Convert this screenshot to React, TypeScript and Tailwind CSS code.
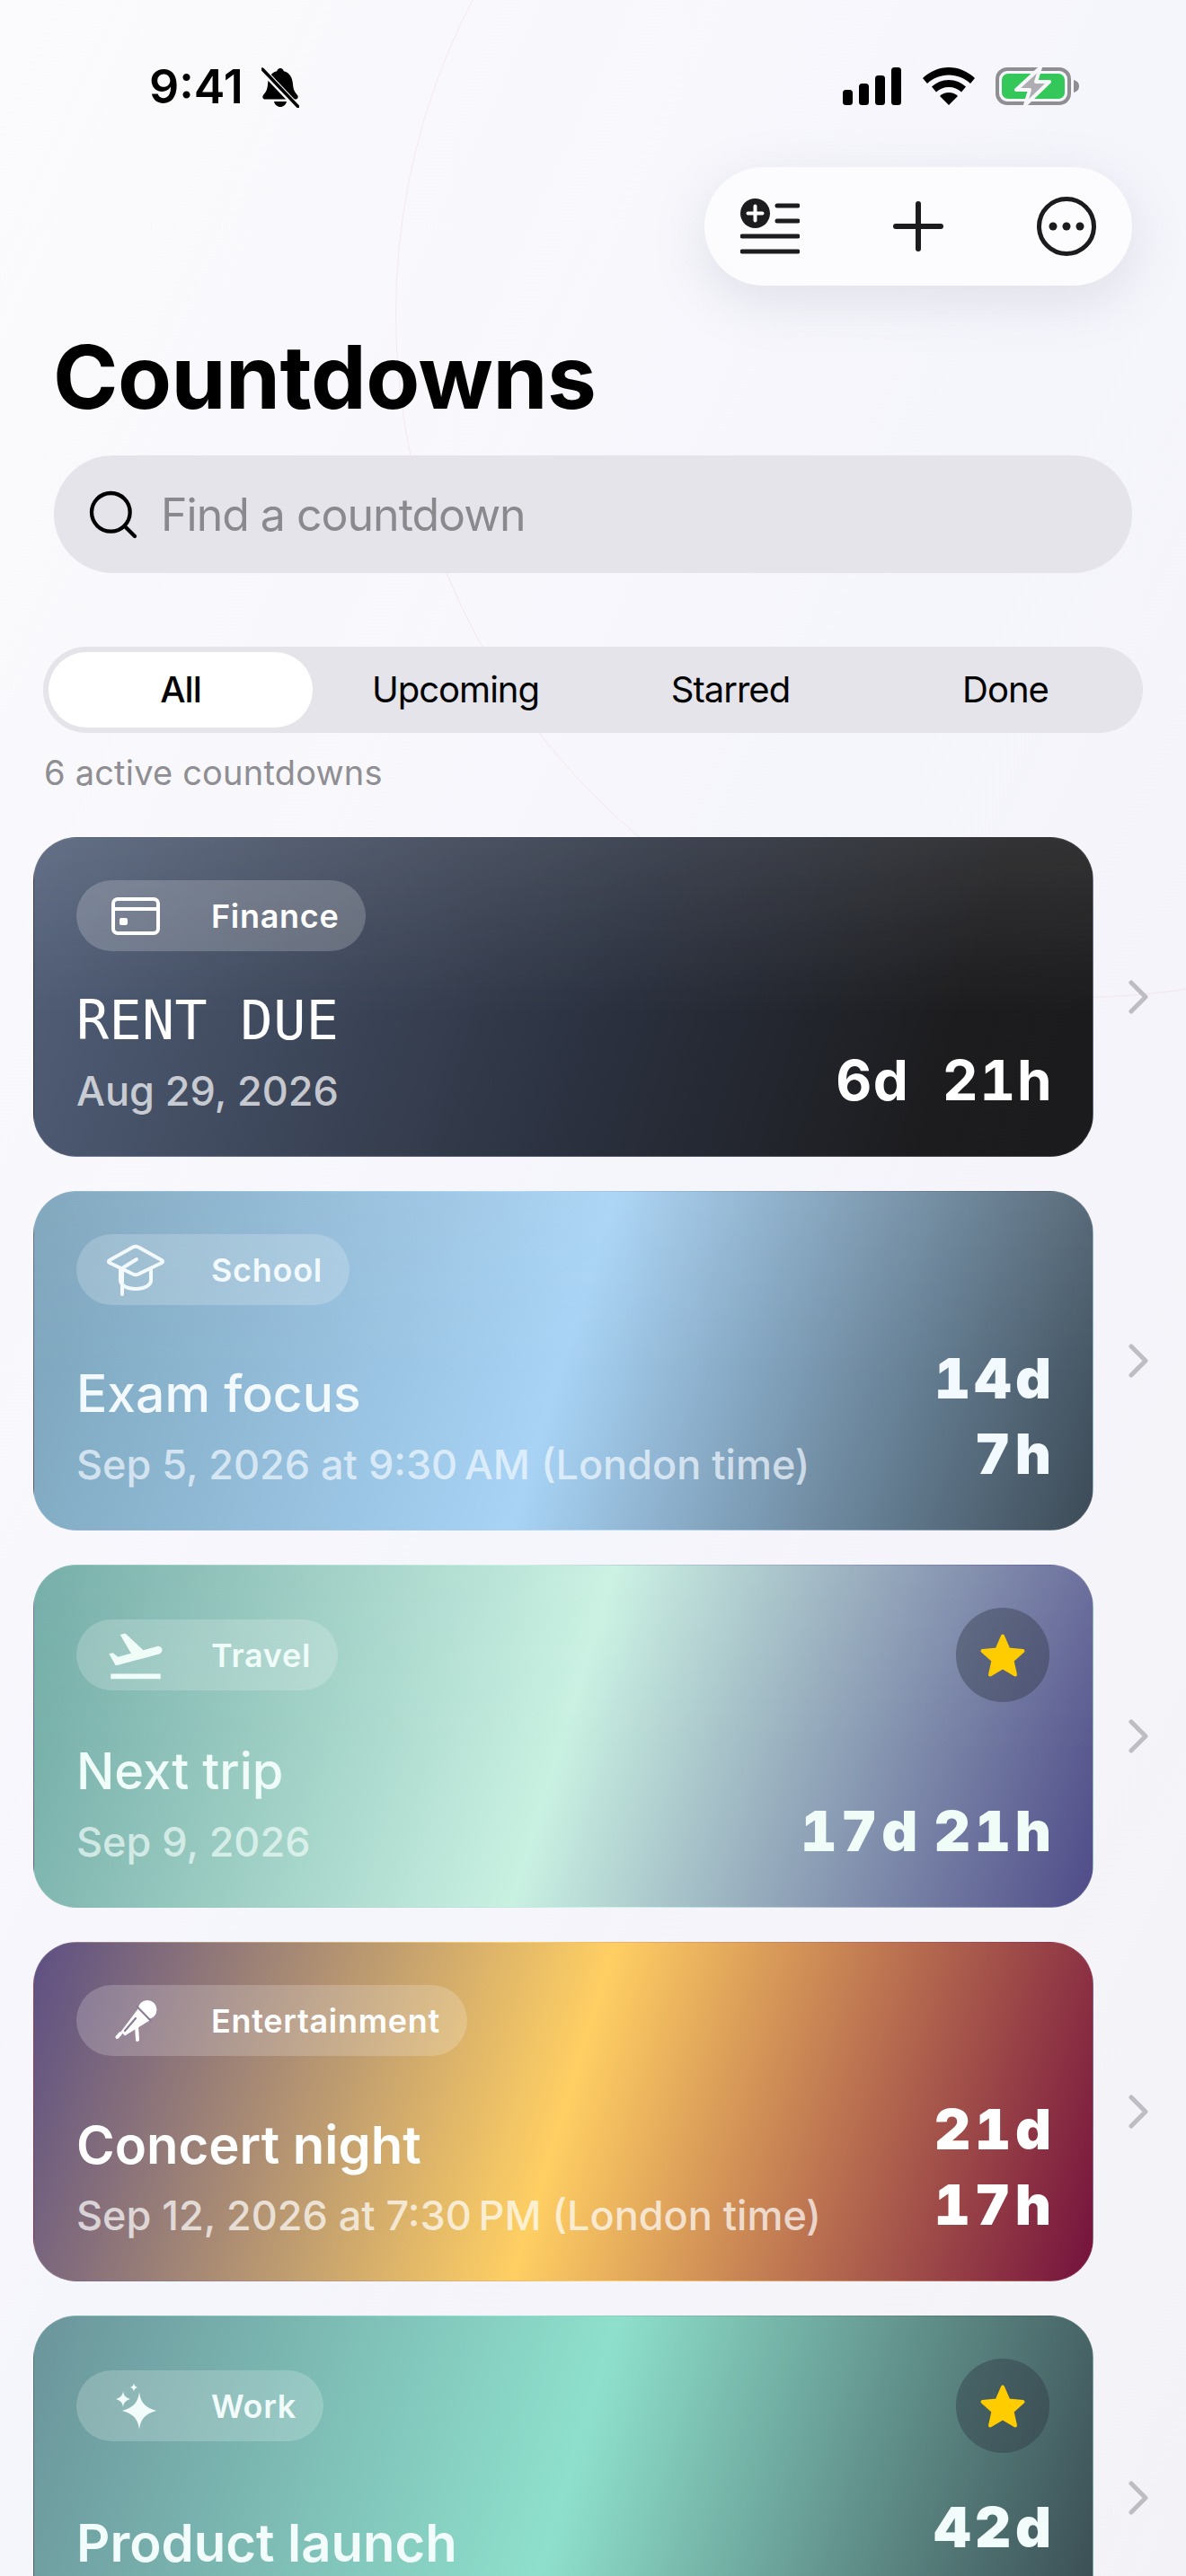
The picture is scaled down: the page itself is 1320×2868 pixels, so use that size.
import React from "react";
import { Search } from "lucide-react";
import { MdFlightTakeoff } from "react-icons/md";

const inter = "font-['Inter','Liberation_Sans',sans-serif]";

const CardIcon = () => (
  <svg viewBox="0 0 54 42" className="h-[42px] w-[54px]" fill="none" stroke="currentColor" strokeWidth="4">
    <rect x="2" y="2" width="50" height="38" rx="5" />
    <path d="M2 13h50" />
    <rect x="9" y="23" width="9" height="8" rx="2" fill="currentColor" stroke="none" />
  </svg>
);

const CapIcon = () => (
  <svg viewBox="0 0 66 58" className="h-[58px] w-[66px]" fill="none" stroke="currentColor" strokeWidth="4" strokeLinecap="round" strokeLinejoin="round">
    <path d="M30 3.500c2-1 4-1 6 0l26 14.500c1.500.8 1.500 2.200 0 3L36 33.500c-2 1-4 1-6 0L4 21c-1.500-.8-1.500-2.200 0-3Z" />
    <path d="M16 29v11c0 6 7 10 17 10s17-4 17-10V29" />
    <path d="M34 17 18 27v29" />
  </svg>
);

const MicIcon = () => (
  <svg viewBox="0 0 47 46" className="h-[46px] w-[47px]" fill="none" stroke="currentColor" strokeLinecap="round" strokeLinejoin="round">
    <circle cx="36" cy="10.500" r="10.500" fill="currentColor" stroke="none" />
    <path d="M26 9 38.500 22.500 11 39.500 6.500 35Z" fill="currentColor" stroke="none" />
    <path d="M24.500 7 40 23" stroke="#8a7c98" strokeWidth="2" />
    <path d="M23 20 11 34" stroke="#8a7c98" strokeWidth="2.200" />
    <path d="M6 37 2.500 41" strokeWidth="4" />
    <path d="M24 29 25 44" strokeWidth="4" />
  </svg>
);

const SparkIcon = () => (
  <svg viewBox="0 0 46 52" className="h-[52px] w-[46px]" fill="currentColor">
    <path d="M27 10c1.500 12 6 17 19 21-13 4-17.500 9-19 21-1.500-12-6-17-19-21 13-4 17.500-9 19-21Z" />
    <path d="M9 9c.7 5 2.300 7 8 9-5.700 2-7.300 4-8 9-.7-5-2.300-7-8-9 5.700-2 7.300-4 8-9Z" />
    <path d="M21 0c.4 3 1.300 4 4 5-2.700 1-3.600 2-4 5-.4-3-1.300-4-4-5 2.700-1 3.600-2 4-5Z" />
  </svg>
);

const Star = () => (
  <svg viewBox="0 0 52 50" className="h-[50px] w-[52px]" fill="#ffcc00" stroke="#ffcc00" strokeWidth="4" strokeLinejoin="round">
    <path d="M26 3.500 32.500 18.500 48.500 20 36.500 30.800 40 46.500 26 38.300 12 46.500 15.500 30.800 3.500 20 19.500 18.500Z" />
  </svg>
);

const Chevron = () => (
  <svg viewBox="0 0 24 38" className="ml-[38px] h-[38px] w-[24px] shrink-0" fill="none" stroke="#bdbdc3" strokeWidth="5" strokeLinecap="round" strokeLinejoin="round">
    <path d="M4 3 20 19 4 35" />
  </svg>
);

const BellSlash = () => (
  <svg viewBox="0 0 42 46" className="h-[46px] w-[42px]">
    <path d="M21 2c2 0 3.500 1.500 3.800 3.200C32 7 34.500 13 35 20c.4 6 2.500 9 5 12 1.500 2 .5 4.500-2 4.500H4c-2.500 0-3.500-2.500-2-4.500 2.500-3 4.600-6 5-12 .5-7 3-13 10.200-14.800C17.500 3.500 19 2 21 2Z" fill="#000" />
    <path d="M14 39h14c-.8 3.500-3.500 6-7 6s-6.200-2.500-7-6Z" fill="#000" />
    <path d="M2 5 40 45" stroke="#f7f7fc" strokeWidth="7" />
    <path d="M1 3 41 45" stroke="#000" strokeWidth="3.500" strokeLinecap="round" />
  </svg>
);

const Signal = () => (
  <svg viewBox="0 0 66 42" className="h-[42px] w-[66px]" fill="#000">
    <rect x="0" y="25" width="11" height="17" rx="3.500" />
    <rect x="18" y="18" width="11" height="24" rx="3.500" />
    <rect x="36" y="9" width="11" height="33" rx="3.500" />
    <rect x="54" y="0" width="11" height="42" rx="3.500" />
  </svg>
);

const Wifi = () => (
  <svg viewBox="0 0 58 42" className="h-[42px] w-[58px]" fill="#000">
    <path d="M29 0c11 0 21 4.500 29 12l-5 6C46.500 12 38 8.500 29 8.500S11.500 12 5 18l-5-6C8 4.500 18 0 29 0Z" />
    <path d="M29 14c7.500 0 14 3 19 7.500l-5 6c-3.500-3.500-8.500-5.500-14-5.500s-10.500 2-14 5.500l-5-6C15 17 21.500 14 29 14Z" />
    <path d="M29 28c4 0 7.500 1.500 10 4L29 42 19 32c2.500-2.500 6-4 10-4Z" />
  </svg>
);

const Battery = () => (
  <svg viewBox="0 0 94 44" className="h-[44px] w-[94px]">
    <rect x="2" y="3" width="80" height="38" rx="11" fill="none" stroke="#8e8e93" strokeWidth="4" />
    <rect x="7" y="8" width="70" height="28" rx="7" fill="#34c759" />
    <path d="M87 15c4 1 6 3.500 6 7s-2 6-6 7Z" fill="#8e8e93" />
    <path d="M50 1 23 26h15l-5 17 27-26H45Z" fill="#aeaeb2" stroke="#f7f7fc" strokeWidth="4" strokeLinejoin="round" />
  </svg>
);

const ListPlus = () => (
  <svg viewBox="0 0 66 62" className="h-[62px] w-[66px]" fill="none" stroke="#1c1c1e" strokeWidth="5" strokeLinecap="round">
    <circle cx="16.500" cy="16.500" r="16.500" fill="#1c1c1e" stroke="none" />
    <path d="M16.500 8.500v16M8.500 16.500h16" stroke="#fff" strokeWidth="4" />
    <path d="M41 8h23M41 25h23M2 42h62M2 59h62" />
  </svg>
);

const PlusIcon = () => (
  <svg viewBox="0 0 66 66" className="h-[66px] w-[66px]" fill="none" stroke="#1c1c1e" strokeWidth="6" strokeLinecap="round">
    <path d="M33 8v50M8 33h50" />
  </svg>
);

const MoreIcon = () => (
  <svg viewBox="0 0 66 66" className="h-[66px] w-[66px]">
    <circle cx="33" cy="33" r="30.500" fill="none" stroke="#1c1c1e" strokeWidth="5" />
    <circle cx="18" cy="33" r="4.500" fill="#1c1c1e" />
    <circle cx="33" cy="33" r="4.500" fill="#1c1c1e" />
    <circle cx="48" cy="33" r="4.500" fill="#1c1c1e" />
  </svg>
);

const heavyTime = "font-black tracking-[5px] [word-spacing:-8px] mr-[-7px]";

const cards = [
  {
    label: "Finance",
    icon: <CardIcon />,
    title: "RENT DUE",
    titleClass: "font-['DejaVu_Sans_Mono',monospace] text-[60px] font-normal tracking-[0.4px]",
    date: "Aug 29, 2026",
    time: ["6d  21h"],
    timeClass: "font-bold tracking-[1.5px] mr-[-4px] whitespace-pre",
    star: false,
    bg: "bg-[linear-gradient(180deg,rgba(255,255,255,0.1),rgba(255,255,255,0)_55%),linear-gradient(107deg,#526079_0%,#2a303e_55%,#1c1c1e_85%,#1b1b1d_100%)]",
    tint: "text-white",
    mt: "mt-[41px]",
  },
  {
    label: "School",
    icon: <CapIcon />,
    title: "Exam focus",
    titleClass: "text-[57px] font-medium",
    date: "Sep 5, 2026 at 9:30\u202fAM (London time)",
    time: ["14d", "7h"],
    timeClass: heavyTime,
    star: false,
    bg: "bg-[linear-gradient(180deg,rgba(255,255,255,0.06),rgba(255,255,255,0)_55%),linear-gradient(107deg,#7ba3ba_0%,#a8d3f5_50%,#3c4a56_100%)]",
    tint: "text-[#f2f9ff]",
    mt: "mt-[40px]",
  },
  {
    label: "Travel",
    icon: <MdFlightTakeoff className="h-[70px] w-[70px]" />,
    title: "Next trip",
    titleClass: "text-[56px] font-medium",
    date: "Sep 9, 2026",
    time: ["17d 21h"],
    timeClass: heavyTime,
    star: true,
    bg: "bg-[linear-gradient(180deg,rgba(255,255,255,0.05),rgba(255,255,255,0)_55%),linear-gradient(107deg,#70aaa5_0%,#c9f1e2_50%,#4f4b88_100%)]",
    tint: "text-[#effcf8]",
    mt: "mt-[41px]",
  },
  {
    label: "Entertainment",
    icon: <MicIcon />,
    title: "Concert night",
    titleClass: "text-[58px] font-semibold",
    date: "Sep 12, 2026 at 7:30\u202fPM (London time)",
    time: ["21d", "17h"],
    timeClass: heavyTime,
    star: false,
    bg: "bg-[linear-gradient(107deg,#5d4f83_0%,#ffcf63_50%,#74113d_100%)]",
    tint: "text-white",
    mt: "mt-[40px]",
  },
  {
    label: "Work",
    icon: <SparkIcon />,
    title: "Product launch",
    titleClass: "text-[58px] font-semibold",
    date: "Oct 4, 2026",
    time: ["42d", "9h"],
    timeClass: heavyTime,
    star: true,
    bg: "bg-[linear-gradient(107deg,#6b959b_0%,#8ee0cc_50%,#37474e_100%)]",
    tint: "text-[#f2fcfa]",
    mt: "mt-[41px]",
  },
];

const tabs = ["All", "Upcoming", "Starred", "Done"];

const App: React.FC = () => {
  return (
    <div className={`relative h-[2868px] w-[1320px] overflow-hidden bg-gradient-to-br from-[#fbfbfd] via-[#f5f5fc] to-[#f3f3f7] ${inter}`}>
      {/* faint ring behind the page */}
      <div className="absolute left-[440px] top-[-411px] h-[1522px] w-[1522px] rounded-full border border-[#f5d5de]/50" />

      <div className="relative flex flex-col">
        {/* Status bar */}
        <div className="flex h-[186px] items-start justify-between pl-[166px] pr-[118px] pt-[74px]">
          <div className="flex items-center gap-[20px]">
            <span className="text-[52px] font-semibold leading-[46px] text-black">9:41</span>
            <BellSlash />
          </div>
          <div className="flex items-center gap-[23px]">
            <Signal />
            <Wifi />
            <Battery />
          </div>
        </div>

        {/* Toolbar */}
        <div className="mr-[60px] flex h-[132px] w-[476px] items-center justify-between self-end rounded-full bg-[#fcfcfe] px-[40px] shadow-[0_16px_60px_rgba(120,120,150,0.18)]">
          <ListPlus />
          <PlusIcon />
          <MoreIcon />
        </div>

        <h1 className="ml-[59px] mt-[42px] text-[98px] font-bold leading-[120px] tracking-[-0.5px] text-black">Countdowns</h1>

        {/* Search */}
        <div className="mx-[60px] mt-[27px] flex h-[131px] items-center rounded-full bg-[#e3e3e9]/95 pl-[34px]">
          <Search className="h-[64px] w-[64px] text-black" strokeWidth={1.6} />
          <span className="ml-[21px] text-[50px] leading-none tracking-[-1px] text-[#8a8a8e]">Find a countdown</span>
        </div>

        {/* Filter tabs */}
        <div className="mx-[48px] mt-[82px] flex h-[96px] items-center rounded-full bg-[#e3e3e9]/95">
          {tabs.map((tab, i) => (
            <div key={tab} className="flex h-full flex-1 items-center justify-center">
              <span
                className={
                  i === 0
                    ? "flex h-[84px] w-[294px] items-center justify-center rounded-full bg-white text-[40px] font-medium tracking-[-1px] text-black"
                    : "text-[40px] tracking-[-1px] text-black"
                }
              >
                {tab}
              </span>
            </div>
          ))}
        </div>

        <p className="ml-[49px] mt-[20px] text-[38px] leading-[48px] tracking-[0.2px] text-[#8e8e93]">6 active countdowns</p>

        {/* Cards */}
        <div className="mt-[48px] flex flex-col gap-[38px] pl-[37px]">
          {cards.map((card) => (
            <div key={card.label} className="flex items-center">
              <div className={`w-[1180px] shrink-0 rounded-[48px] border border-white/10 pb-[42px] pl-[47px] pr-[48px] pt-[47px] ${card.bg} ${card.tint}`}>
                <div className="flex items-center justify-between">
                  <div className="flex h-[79px] items-center rounded-full bg-white/20 pl-[30px] pr-[30px]">
                    <div className="flex w-[72px] items-center justify-center">{card.icon}</div>
                    <span className="ml-[48px] text-[36px] font-semibold tracking-[0.7px]">{card.label}</span>
                  </div>
                  {card.star && (
                    <div className="flex h-[105px] w-[104px] items-center justify-center rounded-full bg-[#2c3440]/40">
                      <Star />
                    </div>
                  )}
                </div>
                <div className={`${card.mt} flex items-end justify-between`}>
                  <div>
                    <div className={`h-[72px] leading-[72px] ${card.titleClass}`}>{card.title}</div>
                    <div className="mt-[13px] h-[60px] text-[45px] font-medium leading-[60px] opacity-70">{card.date}</div>
                  </div>
                  <div className={`text-right text-[62px] leading-[84px] tabular-nums ${card.timeClass}`}>
                    {card.time.map((line) => (
                      <div key={line}>{line}</div>
                    ))}
                  </div>
                </div>
              </div>
              <Chevron />
            </div>
          ))}
        </div>
      </div>
    </div>
  );
};

export default App;
